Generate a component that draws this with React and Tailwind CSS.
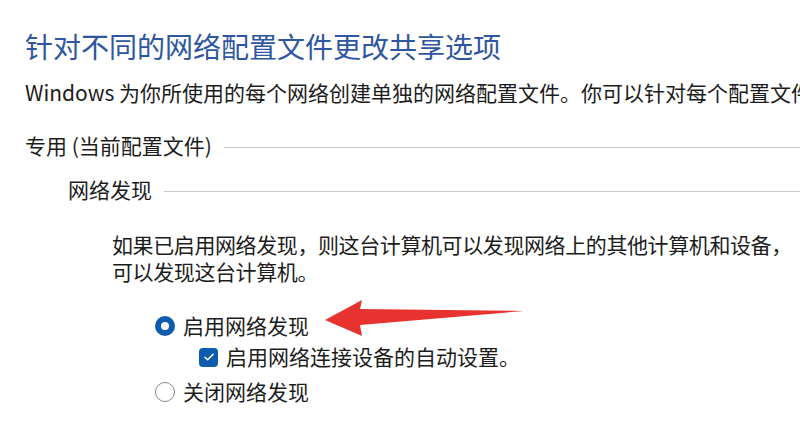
import React from 'react';

const Radio = ({ checked }) => (
  checked ? (
    <span className="flex items-center justify-center w-[20px] h-[20px] rounded-full bg-[#0b5cad]">
      <span className="w-[8px] h-[8px] rounded-full bg-white" />
    </span>
  ) : (
    <span className="w-[20px] h-[20px] rounded-full border-[1.5px] border-[#8a8a8a] bg-white" />
  )
);

const Checkbox = () => (
  <span className="flex items-center justify-center w-[19px] h-[19px] rounded-[4px] bg-[#0b5cad]">
    <svg width="12" height="12" viewBox="0 0 12 12" fill="none">
      <path d="M2 6.3l2.6 2.5L10 3.4" stroke="white" strokeWidth="1.5" strokeLinecap="round" strokeLinejoin="round" />
    </svg>
  </span>
);

const SectionHead = ({ label, className }) => (
  <div className={`flex items-center h-[30px] ${className}`}>
    <span className="whitespace-nowrap">{label}</span>
    <span className="flex-1 h-px bg-[#c9c9c9] ml-[12px] mt-[3px]" />
  </div>
);

export default function App() {
  return (
    <div
      className="relative w-[800px] h-[427px] overflow-hidden bg-white text-[#1c1c1c] text-[21px]"
      style={{ fontFamily: '"Noto Sans CJK SC", "Noto Sans", sans-serif' }}
    >
      <div className="pl-[25px] pt-[28px]">
        <h1 className="text-[28px] leading-[36px] text-[#2f56a0] whitespace-nowrap">
          针对不同的网络配置文件更改共享选项
        </h1>
        <p className="mt-[13px] leading-[30px] whitespace-nowrap">
          Windows 为你所使用的每个网络创建单独的网络配置文件。你可以针对每个配置文件
        </p>

        <SectionHead label="专用 (当前配置文件)" className="mt-[24px]" />
        <SectionHead label="网络发现" className="mt-[14px] pl-[43px]" />

        <div className="mt-[26px] pl-[87px] leading-[27px] whitespace-nowrap tracking-[-0.4px]">
          <p>如果已启用网络发现，则这台计算机可以发现网络上的其他计算机和设备，</p>
          <p>可以发现这台计算机。</p>
        </div>

        <div className="pl-[130px]">
          <div className="mt-[26px] h-[30px] flex items-center gap-[8px]">
            <Radio checked />
            <span>启用网络发现</span>
          </div>
          <div className="mt-[1px] h-[30px] flex items-center gap-[8px] pl-[44px]">
            <Checkbox />
            <span>启用网络连接设备的自动设置。</span>
          </div>
          <div className="mt-[5px] h-[30px] flex items-center gap-[8px]">
            <Radio />
            <span>关闭网络发现</span>
          </div>
        </div>
      </div>

      <svg className="absolute left-0 top-0" width="800" height="427" viewBox="0 0 800 427">
        <path
          d="M325 320 L362 300 L360 309 L524 311 L360 325 L362 336 Z"
          fill="#e8322f"
        />
      </svg>
    </div>
  );
}
